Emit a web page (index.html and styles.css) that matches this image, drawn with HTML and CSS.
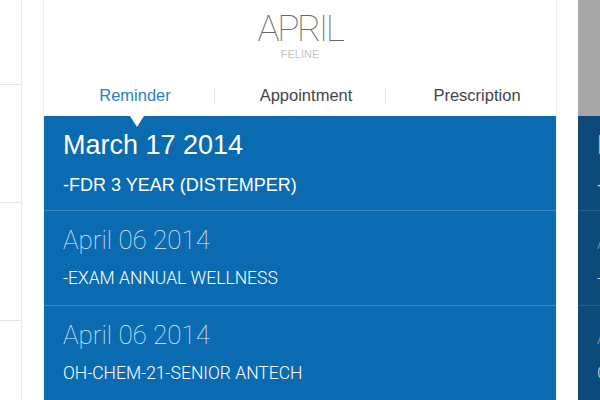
FILE: index.html
```html
<!DOCTYPE html>
<html>
<head>
<meta name="viewport" content="width=device-width, initial-scale=1">
<link rel="stylesheet" href="styles.css">
</head>
<body>

<!-- previous pet, mostly off screen -->
<div class="side side-left">
  <div class="side-row first"></div>
  <div class="side-row"></div>
  <div class="side-row"></div>
  <div class="side-row"></div>
</div>

<div class="card">
  <div class="pet">
    <h1 class="pet-name">APRIL</h1>
    <p class="pet-kind">FELINE</p>
    <div class="tabs">
      <a class="tab active">Reminder</a>
      <a class="tab">Appointment</a>
      <a class="tab">Prescription</a>
    </div>
  </div>

  <ul class="reminders">
    <li class="reminder current">
      <div class="date">March 17 2014</div>
      <div class="what">-FDR 3 YEAR (DISTEMPER)</div>
    </li>
    <li class="reminder">
      <div class="date">April 06 2014</div>
      <div class="what">-EXAM ANNUAL WELLNESS</div>
    </li>
    <li class="reminder">
      <div class="date">April 06 2014</div>
      <div class="what">OH-CHEM-21-SENIOR ANTECH</div>
    </li>
  </ul>
</div>

<!-- next pet, dimmed -->
<div class="side side-right">
  <div class="side-top"></div>
  <ul class="reminders dim">
    <li class="reminder current">
      <div class="date">March 17 2014</div>
      <div class="what">-FDR 3 YEAR (DISTEMPER)</div>
    </li>
    <li class="reminder">
      <div class="date">April 06 2014</div>
      <div class="what">-EXAM ANNUAL WELLNESS</div>
    </li>
    <li class="reminder">
      <div class="date">April 06 2014</div>
      <div class="what">OH-CHEM-21-SENIOR ANTECH</div>
    </li>
  </ul>
</div>

</body>
</html>
```

FILE: styles.css
```css
* {box-sizing: border-box;}

body {
  margin: 0;
  height: 400px;
  overflow: hidden;
  display: flex;
  gap: 21px;
  background: #fff;
  font-family: "Liberation Sans", Arial, Helvetica, sans-serif;
}

/* side cards peeking in from the edges */
.side {
  flex: none;
  width: 22px;
  height: 400px;
  overflow: hidden;
}

.side-left {
  border-right: 1px solid #ececec;
}

.side-row {
  height: 118px;
  border-bottom: 1px solid #e6e6e6;
}

.side-row.first {
  height: 85px;
}

.side-right {
  flex: 1;
  background: #0c4a79;
}

.side-top {
  height: 116px;
  background: #a7a7a7;
}

/* the main card */
.card {
  flex: none;
  width: 514px;
  border-left: 1px solid #eeeeee;
  border-right: 1px solid #eeeeee;
}

.pet {
  height: 116px;
  padding-top: 10px;
  text-align: center;
}

.pet-name {
  margin: 0;
  font-family: Roboto, sans-serif;
  font-weight: 100;
  font-size: 37px;
  line-height: 38px;
  letter-spacing: -2.5px;
  color: #666;
}

.pet-kind {
  margin: 0;
  font-size: 11px;
  line-height: 12px;
  color: #c4c4c4;
}

.tabs {
  display: flex;
  margin-top: 28px;
}

.tab {
  position: relative;
  flex: 1;
  padding-left: 12px;
  font-size: 16.5px;
  line-height: 15px;
  color: #444;
}

.tab + .tab {
  border-left: 1px solid #e2e2e2;
}

.tab.active {
  color: #2a80c4;
}

/* little notch under the active tab */
.tab.active::after {
  content: "";
  position: absolute;
  left: 86px;
  top: 28px;
  border-left: 7px solid transparent;
  border-right: 7px solid transparent;
  border-top: 11px solid #fff;
}

.reminders {
  list-style: none;
  margin: 0;
  padding: 0;
  background: #0a6bb1;
  height: 284px;
}

.reminder {
  height: 95px;
  padding: 14px 0 0 19px;
  border-bottom: 1px solid #3a88c4;
  color: #fff;
  white-space: nowrap;
}

.date {
  font-family: Roboto, sans-serif;
  font-weight: 100;
  font-size: 26px;
  line-height: 30px;
  color: #e4eef8;
}

.what {
  margin-top: 13px;
  font-family: Roboto, sans-serif;
  font-weight: 300;
  font-size: 17.5px;
  line-height: 20px;
}

.reminder.current .date {
  font-family: "Liberation Sans", Arial, sans-serif;
  font-weight: normal;
  font-size: 27px;
  color: #fff;
}

.reminder.current .what {
  margin-top: 15px;
  font-family: "Liberation Sans", Arial, sans-serif;
  font-size: 18px;
}

.reminders.dim {
  background: transparent;
}

.reminders.dim .reminder {
  border-bottom-color: #2b5f8b;
  color: #c9d6e2;
}

.reminders.dim .date {
  color: #9fb4c8;
}

.reminders.dim .current .date {
  color: #c9d6e2;
}
```
